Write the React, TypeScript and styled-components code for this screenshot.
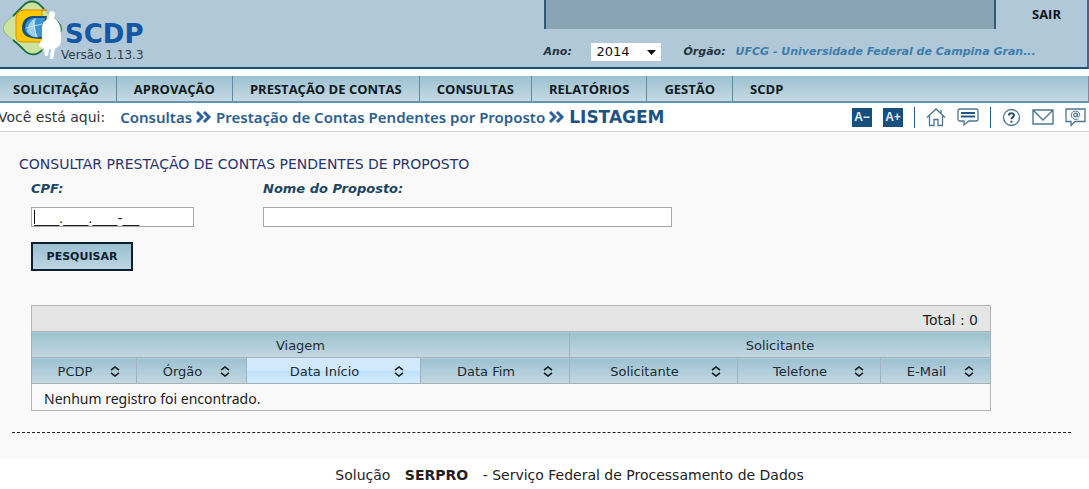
import React from "react";
import styled, { createGlobalStyle } from "styled-components";

const GlobalStyle = createGlobalStyle`
  * { box-sizing: border-box; }
  body {
    margin: 0;
    background: #fff;
    color: #222;
    font: 13px/16px "DejaVu Sans", Verdana, sans-serif;
    overflow-x: hidden;
  }
  a { color: inherit; text-decoration: none; }
  button, input, select { font: inherit; }
`;

const Header = styled.header`
  display: flex;
  height: 69px;
  background: #b1c8d8;
  border-bottom: 2px solid #1c4e79;
  border-right: 2px solid #2f6c98;
`;

const Brand = styled.a`
  flex: 1;
  display: flex;
`;

const BrandText = styled.span`
  display: flex;
  flex-direction: column;
  padding-top: 20px;
`;

const BrandName = styled.strong`
  margin-left: 2px;
  font-size: 26px;
  line-height: 28px;
  color: #1457a4;
`;

const Version = styled.span`
  margin-left: -2px;
  font-size: 12px;
  line-height: 14px;
  color: #2c3c48;
`;

const HeaderSide = styled.div`
  width: 50%;
  display: flex;
  flex-direction: column;
`;

const HeaderTop = styled.div`
  display: flex;
  height: 29px;
`;

const UserBar = styled.div`
  flex: 1;
  background: #88a4b5;
  border: solid #2f5b77;
  border-width: 0 2px;
`;

const Exit = styled.a`
  padding: 6px 26px 0 36px;
  font: bold 13px/16px "Open Sans", sans-serif;
  color: #101418;
`;

const HeaderFields = styled.div`
  display: flex;
  align-items: center;
  height: 38px;
  padding-top: 7px;
  font-size: 11px;
  font-weight: bold;
  font-style: italic;
  color: #24333e;
  white-space: nowrap;
`;

const YearLabel = styled.label`
  width: 47px;
`;

const YearBox = styled.span`
  position: relative;
  width: 70px;
  height: 18px;
  margin-right: 23px;
`;

const YearSelect = styled.select`
  appearance: none;
  display: block;
  width: 100%;
  height: 18px;
  padding: 0 6px;
  border: 0;
  background: #fff;
  color: #111;
  font-size: 13px;
  font-weight: normal;
  font-style: normal;
`;

const SelectArrow = styled.svg`
  position: absolute;
  right: 5px;
  top: 7px;
  pointer-events: none;
`;

const Agency = styled.span`
  margin-left: 10px;
  color: #3d7dac;
`;

const Menu = styled.nav`
  display: flex;
  height: 27px;
  margin-top: 7px;
  background: linear-gradient(#9cc1d0, #c5d9e3);
  border-bottom: 2px solid #6593b0;
  border-right: 1px solid #6593b0;
`;

const MenuItem = styled.a`
  padding: 0 17px;
  border-right: 1px solid #5f8ca6;
  font: bold 13px/26px "Open Sans", sans-serif;
  color: #101a22;

  &:first-child { padding-left: 13px; }
  &:last-child { border-right: 0; }
`;

const Trail = styled.div`
  display: flex;
  align-items: center;
  justify-content: space-between;
  height: 29px;
  border-bottom: 1px solid #cfcfcf;
`;

const Crumbs = styled.nav`
  display: flex;
  align-items: center;
  gap: 4px;
  margin-left: -2px;
  font: 600 15px/20px "Noto Sans", sans-serif;
  color: #2c608e;
  white-space: nowrap;
`;

const Here = styled.span`
  margin-right: 11px;
  font: 14px/20px "DejaVu Sans", Verdana, sans-serif;
  color: #333;
`;

const Current = styled.strong`
  font: bold 17px/20px "DejaVu Sans", Verdana, sans-serif;
  color: #1e5283;
`;

const Tools = styled.div`
  display: flex;
  align-items: center;
  gap: 11px;
  padding: 0 3px 0 0;
  color: #4d7593;
`;

const SizeButton = styled.button`
  width: 20px;
  height: 19px;
  padding: 0;
  border: 0;
  background: #17507f;
  color: #e4edf4;
  font: bold 12px/19px "Liberation Sans", sans-serif;
`;

const ToolLink = styled.a`
  display: flex;
`;

const Divider = styled.span`
  width: 1px;
  height: 21px;
  background: #2f6089;
`;

const Main = styled.main`
  padding: 23px 18px 26px 12px;
  background: #f9f9f9;
`;

const Title = styled.h1`
  margin: 0 0 8px 7px;
  font-size: 14px;
  font-weight: normal;
  line-height: 18px;
  color: #29346c;
`;

const Form = styled.form`
  margin-left: 19px;
`;

const Fields = styled.div`
  display: flex;
  gap: 69px;
`;

const Field = styled.label<{ $width: number }>`
  display: flex;
  flex-direction: column;
  gap: 10px;
  width: ${(p) => p.$width}px;
  font-weight: bold;
  font-style: italic;
  color: #1d4660;
`;

const TextInput = styled.input<{ $caret?: boolean }>`
  width: 100%;
  height: 20px;
  padding: 0 2px;
  border: 1px solid #a8a8a8;
  background: ${(p) => (p.$caret ? "linear-gradient(#111, #111) 2px 2px / 1px 14px no-repeat #fff" : "#fff")};
  color: #222;
  font: 15px/17px "Liberation Sans", Arial, sans-serif;
  outline: 0;
`;

const Search = styled.button`
  display: block;
  width: 102px;
  height: 29px;
  margin-top: 15px;
  padding: 0;
  border: 2px solid #0c2031;
  background: linear-gradient(#9bc0d1, #bcd5e2);
  color: #10202c;
  font-size: 11px;
  font-weight: bold;
`;

const Results = styled.table`
  width: calc(100% - 99px);
  margin: 34px 0 0 19px;
  border-collapse: collapse;
  table-layout: fixed;
  border: 1px solid #b4b4b4;
`;

const Total = styled.td`
  height: 26px;
  padding: 2px 12px 0;
  background: #e5e5e5;
  font-size: 14px;
  text-align: right;
`;

const HeadCell = styled.th<{ $active?: boolean }>`
  height: 26px;
  padding: 2px 0 0;
  border: 1px solid #a3b1b9;
  background: ${(p) =>
    p.$active ? "linear-gradient(#d2e9fb 50%, #bfe0fa 50%, #d3ebfc)" : "linear-gradient(#9cc1d1, #c3d7e1)"};
  color: #1c2b35;
  font-weight: normal;
`;

const SortButton = styled.button`
  display: flex;
  align-items: center;
  width: 100%;
  padding: 0 16px 0 8px;
  border: 0;
  background: none;
  color: inherit;
`;

const SortLabel = styled.span`
  flex: 1;
  white-space: nowrap;
`;

const EmptyCell = styled.td`
  height: 27px;
  padding: 4px 12px 0;
  font-family: "Noto Sans", sans-serif;
  font-size: 14px;
`;

const Rule = styled.hr`
  margin: 21px 0 0;
  border: 0;
  border-top: 1px dashed #222;
`;

const Footer = styled.footer`
  padding: 8px 0 6px 50px;
  text-align: center;
  font-size: 14px;
`;

const Company = styled.strong`
  margin: 0 10px;
`;

const menu = ["SOLICITAÇÃO", "APROVAÇÃO", "PRESTAÇÃO DE CONTAS", "CONSULTAS", "RELATÓRIOS", "GESTÃO", "SCDP"];

const columns = [
  { label: "PCDP", width: 105 },
  { label: "Órgão", width: 110 },
  { label: "Data Início", width: 174, active: true },
  { label: "Data Fim", width: 149 },
  { label: "Solicitante", width: 168 },
  { label: "Telefone", width: 143 },
  { label: "E-Mail", width: 110 },
];
const totalWidth = columns.reduce((sum, c) => sum + c.width, 0);

const Column = styled.col<{ $share: number }>`
  width: ${(p) => p.$share}%;
`;

const Logo = () => (
  <svg width="63" height="60" viewBox="0 0 63 60" aria-hidden="true">
    <path d="M32 1C37 1 40 4 43 8C47 13 52 17 57 21C63 26 63 31 57 36C51 41 46 45 42 50C36 56 29 56 24 50C19 44 13 40 7 35C2 31 2 26 7 21C13 16 18 12 22 7C25 3 28 1 32 1Z" fill="#cbe39c" stroke="#8dbb7c" />
    <path d="M13 16C17 12 20 9 23 6C28 0 36 0 41 6L44 9" fill="none" stroke="#176f45" strokeWidth="1.800" />
    <path d="M13 40C17 43 20 46 23 49C29 56 37 56 42 50" fill="none" stroke="#176f45" strokeWidth="1.800" />
    <path d="M52 17L58 22C62 26 62 30 60 33" fill="none" stroke="#39915a" strokeWidth="1.500" />
    <path d="M47 10H25C19 10 16 13 16 19V35C16 40 18 42 23 42H42V10Z" fill="#fdc900" stroke="#d98c12" />
    <path d="M47 16H33C26 16 22 21 22 28C22 35 27 39 42 39Z" fill="#1d4f80" />
    <path d="M45 18H34C28 19 25 23 25 28C25 34 30 37 42 37Z" fill="#3b94cf" />
    <path d="M27 31C28 24 31 20 36 18C34 25 35 31 38 37C33 38 29 35 27 31Z" fill="#9ad0ec" />
    <path d="M33 20L36 36M26 28L42 24" fill="none" stroke="#d5eefa" strokeWidth=".8" />
    <path d="M52 11C55 11 56 14 54 18C57 20 59 23 60 27C61 33 62 40 60 45L55 49L53 59H50L51 49H49L48 56H45L44 49L39 46L42 38V30C42 24 43 21 49 19C48 15 49 11 52 11Z" fill="#fff" />
  </svg>
);

const Chevrons = () => (
  <svg width="16" height="12" viewBox="0 0 16 12" fill="none" stroke="#2d62a0" strokeWidth="3" aria-hidden="true">
    <path d="M1 1L6 6L1 11M8 1L13 6L8 11" />
  </svg>
);

const SortIcon = () => (
  <svg width="10" height="11" viewBox="0 0 10 11" fill="none" stroke="#111a20" strokeWidth="1.600" aria-hidden="true">
    <path d="M1 4.200L5 1L9 4.200M1 6.800L5 10L9 6.800" />
  </svg>
);

const HomeIcon = () => (
  <svg width="20" height="19" viewBox="0 0 20 19" fill="none" stroke="currentColor" strokeWidth="1.300">
    <path d="M1 9.500L10 1L19 9.500M3.500 8V17.500H8V11.500H12V17.500H16.500V8M15 2V5" />
  </svg>
);

const ChatIcon = () => (
  <svg width="22" height="19" viewBox="0 0 22 19" fill="none" stroke="currentColor" strokeWidth="1.300">
    <path d="M3 1H19C20.500 1 21 2 21 3V11C21 12.500 20 13 19 13H12L7 17V13H3C1.500 13 1 12 1 11V3C1 2 1.500 1 3 1Z" />
    <path d="M4 5H18M4 8.500H18" stroke="#255781" strokeWidth="2" />
  </svg>
);

const HelpIcon = () => (
  <svg width="19" height="19" viewBox="0 0 19 19" fill="none" stroke="currentColor" strokeWidth="1.300">
    <circle cx="9.500" cy="9.500" r="8" />
    <path d="M7 7.500C7 4.500 12 4.500 12 7.300C12 9.300 9.500 9 9.500 11.300M9.500 12.800V14.500" stroke="#2b5069" strokeWidth="2" />
  </svg>
);

const MailIcon = () => (
  <svg width="22" height="16" viewBox="0 0 22 16" fill="none" stroke="currentColor" strokeWidth="1.400">
    <path d="M1 1H21V15H1ZM1 1L11 11L21 1" />
  </svg>
);

const ContactIcon = () => (
  <svg width="21" height="19" viewBox="0 0 21 19" fill="none" stroke="currentColor" strokeWidth="1.300">
    <path d="M1 1H20V13.500H10L6 17.500V13.500H1Z" />
    <circle cx="10.500" cy="7" r="1.800" />
    <path d="M12.300 5V8C12.300 9.500 14.800 9.200 14.800 7C14.800 1.800 6.200 1.800 6.200 7C6.200 10.800 10.500 12.300 13.500 10.800" strokeWidth="1" />
  </svg>
);

export default function App() {
  return (
    <>
      <GlobalStyle />
      <Header>
        <Brand href="#">
          <Logo />
          <BrandText>
            <BrandName>SCDP</BrandName>
            <Version>Versão 1.13.3</Version>
          </BrandText>
        </Brand>
        <HeaderSide>
          <HeaderTop>
            <UserBar />
            <Exit href="#">SAIR</Exit>
          </HeaderTop>
          <HeaderFields>
            <YearLabel htmlFor="year">Ano:</YearLabel>
            <YearBox>
              <YearSelect id="year" defaultValue="2014">
                <option>2014</option>
              </YearSelect>
              <SelectArrow width="9" height="5" viewBox="0 0 9 5" aria-hidden="true">
                <path d="M0 0H9L4.500 5Z" fill="#111" />
              </SelectArrow>
            </YearBox>
            <span>Órgão:</span>
            <Agency>UFCG - Universidade Federal de Campina Gran...</Agency>
          </HeaderFields>
        </HeaderSide>
      </Header>
      <Menu>
        {menu.map((item) => (
          <MenuItem key={item} href="#">{item}</MenuItem>
        ))}
      </Menu>
      <Trail>
        <Crumbs>
          <Here>Você está aqui:</Here>
          <a href="#">Consultas</a>
          <Chevrons />
          <a href="#">Prestação de Contas Pendentes por Proposto</a>
          <Chevrons />
          <Current>LISTAGEM</Current>
        </Crumbs>
        <Tools>
          <SizeButton type="button">A−</SizeButton>
          <SizeButton type="button">A+</SizeButton>
          <Divider />
          <ToolLink href="#" aria-label="Início"><HomeIcon /></ToolLink>
          <ToolLink href="#" aria-label="Mensagens"><ChatIcon /></ToolLink>
          <Divider />
          <ToolLink href="#" aria-label="Ajuda"><HelpIcon /></ToolLink>
          <ToolLink href="#" aria-label="E-mail"><MailIcon /></ToolLink>
          <ToolLink href="#" aria-label="Contato"><ContactIcon /></ToolLink>
        </Tools>
      </Trail>
      <Main>
        <Title>CONSULTAR PRESTAÇÃO DE CONTAS PENDENTES DE PROPOSTO</Title>
        <Form>
          <Fields>
            <Field $width={163}>
              CPF:
              <TextInput $caret defaultValue="___.___.___-__" />
            </Field>
            <Field $width={409}>
              Nome do Proposto:
              <TextInput />
            </Field>
          </Fields>
          <Search type="button">PESQUISAR</Search>
        </Form>
        <Results>
          <colgroup>
            {columns.map((c) => (
              <Column key={c.label} $share={(c.width / totalWidth) * 100} />
            ))}
          </colgroup>
          <thead>
            <tr>
              <Total colSpan={7}>Total : 0</Total>
            </tr>
            <tr>
              <HeadCell colSpan={4}>Viagem</HeadCell>
              <HeadCell colSpan={3}>Solicitante</HeadCell>
            </tr>
            <tr>
              {columns.map((c) => (
                <HeadCell key={c.label} $active={c.active}>
                  <SortButton type="button">
                    <SortLabel>{c.label}</SortLabel>
                    <SortIcon />
                  </SortButton>
                </HeadCell>
              ))}
            </tr>
          </thead>
          <tbody>
            <tr>
              <EmptyCell colSpan={7}>Nenhum registro foi encontrado.</EmptyCell>
            </tr>
          </tbody>
        </Results>
        <Rule />
      </Main>
      <Footer>
        Solução <Company>SERPRO</Company> - Serviço Federal de Processamento de Dados
      </Footer>
    </>
  );
}
